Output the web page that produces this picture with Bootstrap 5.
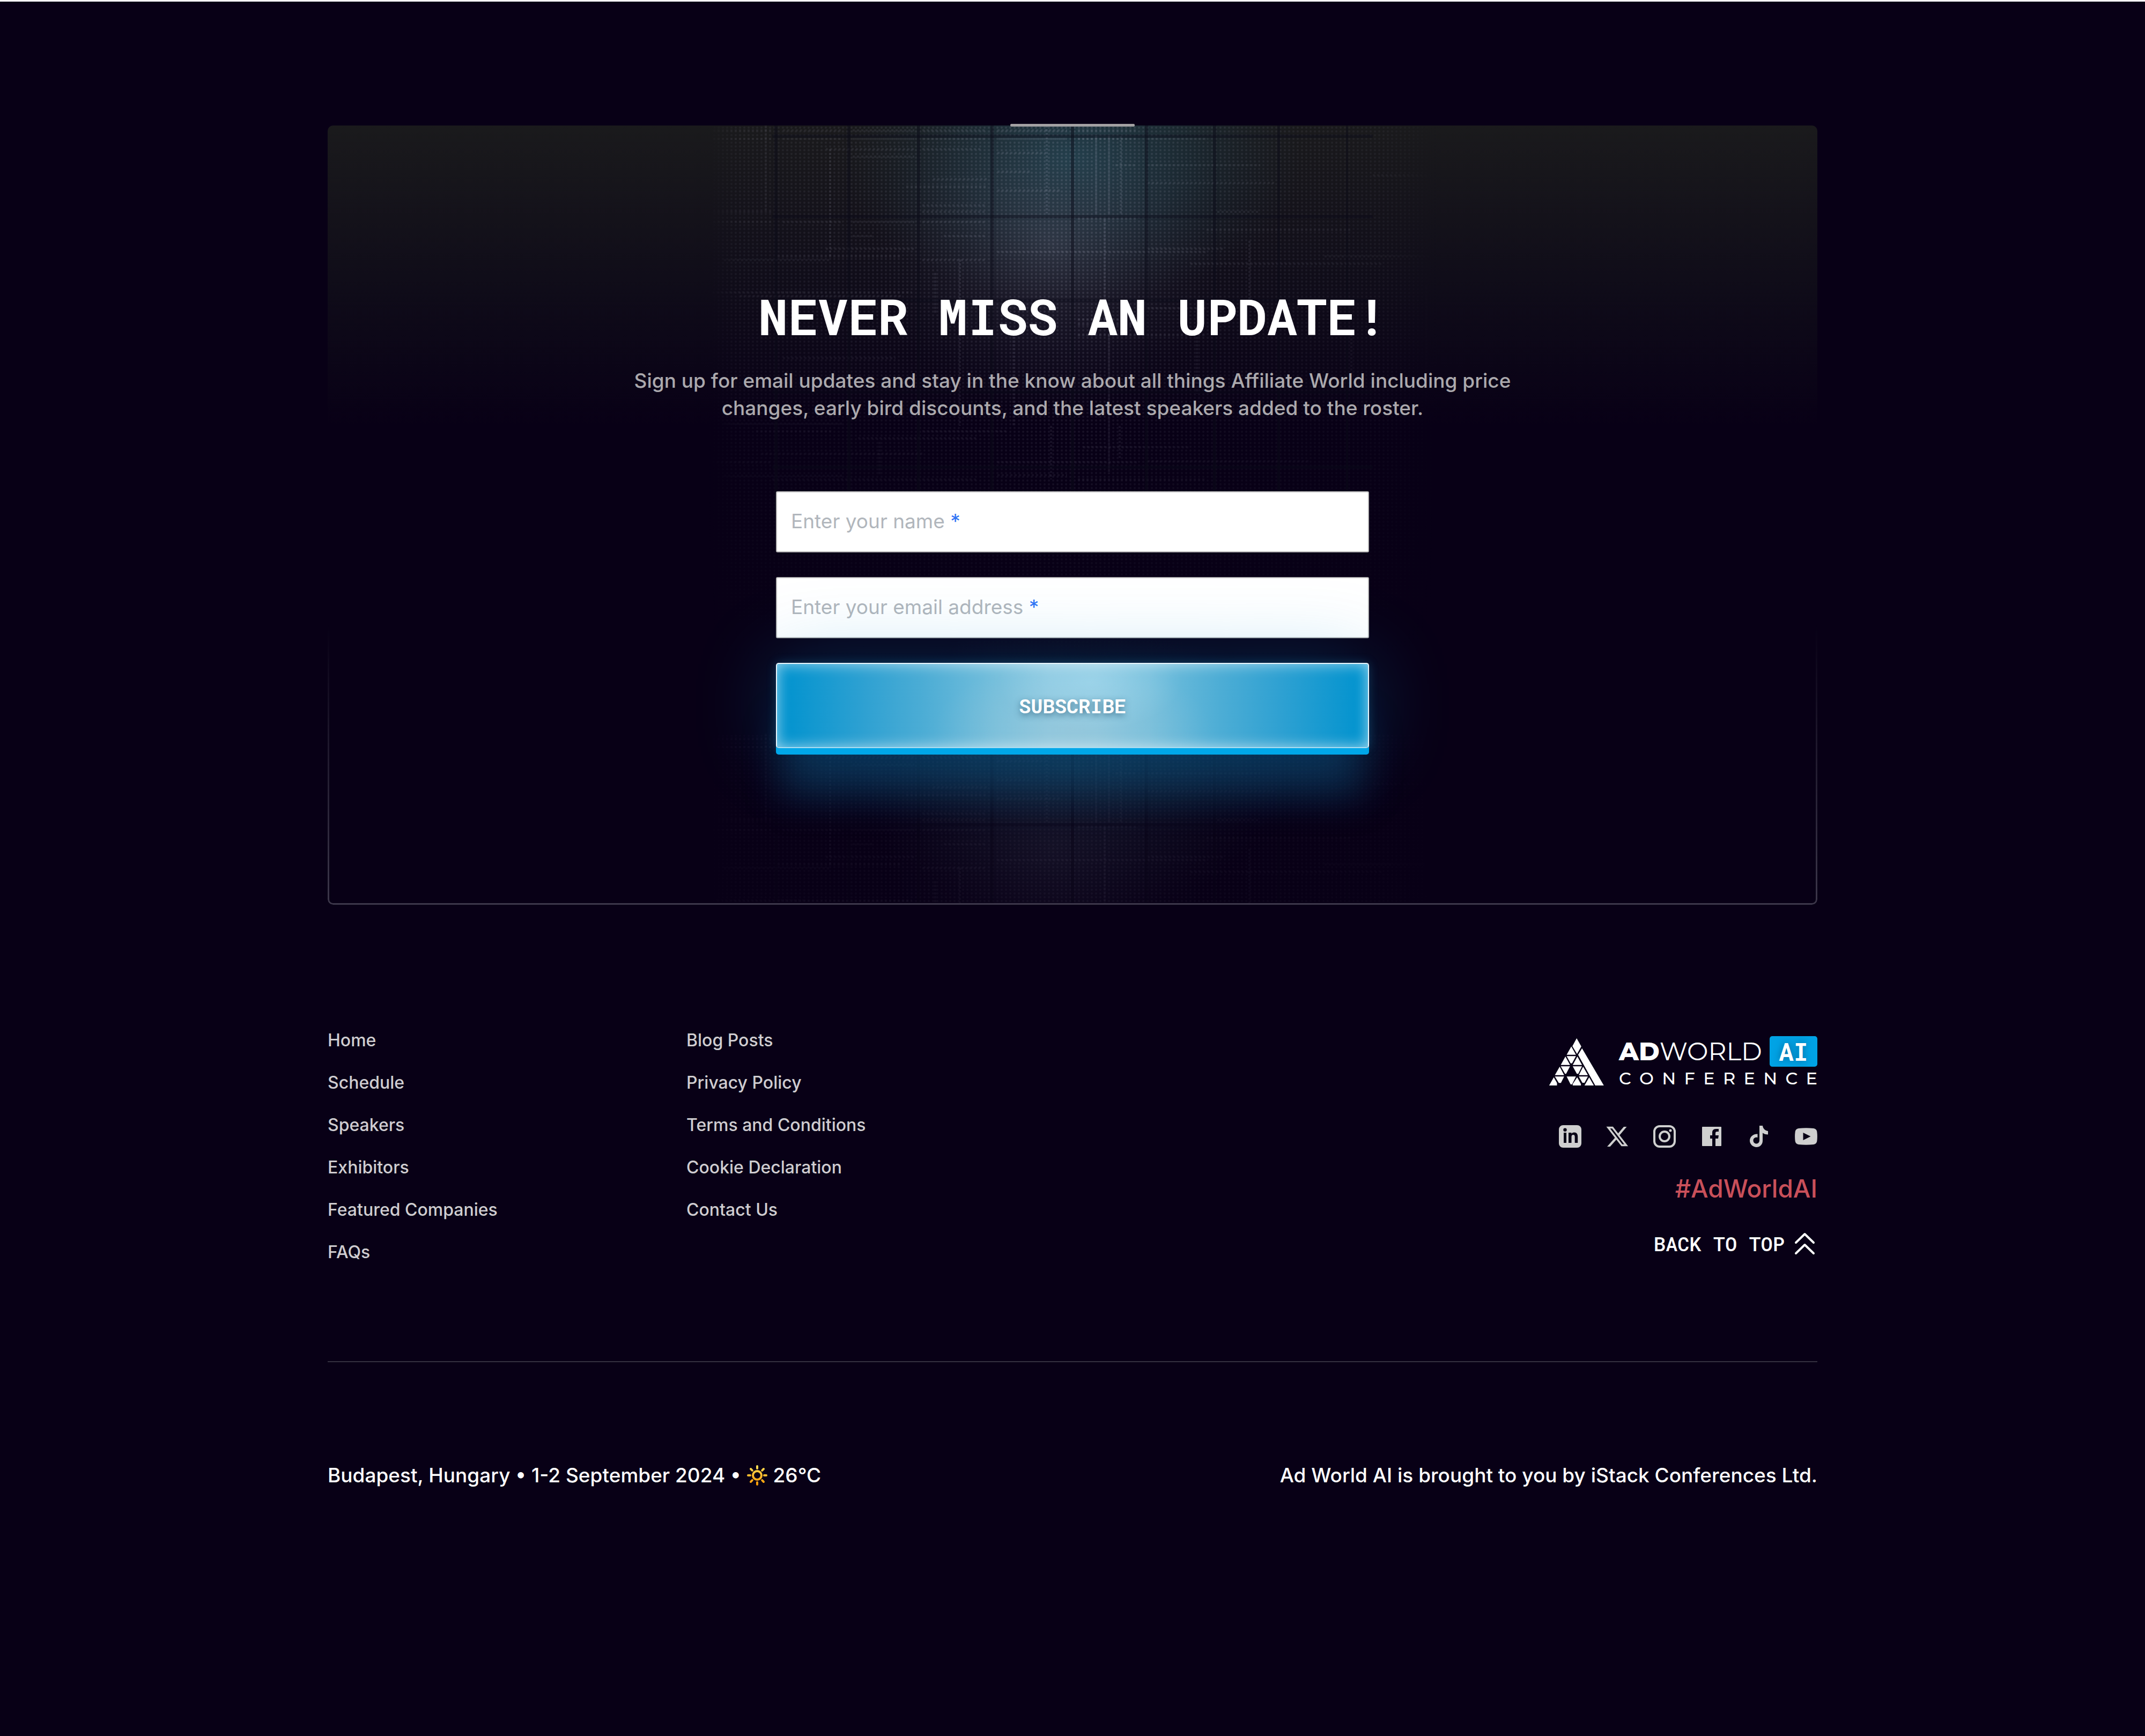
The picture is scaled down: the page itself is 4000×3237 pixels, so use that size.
<!DOCTYPE html>
<html lang="en">
<head>
<meta charset="utf-8">
<meta name="viewport" content="width=device-width, initial-scale=1">
<title>Ad World AI Conference</title>
<link rel="stylesheet" href="https://cdn.jsdelivr.net/npm/bootstrap@5.3.0/dist/css/bootstrap.min.css">
<style>
:root{--night:#080016;--sky:#00a7e9;--mono:"Roboto Mono","DejaVu Sans Mono",monospace}
body{background:var(--night);color:#fff;font-family:Inter,"Liberation Sans",sans-serif;font-size:37px;font-weight:500;line-height:51px;border-top:3px solid #fff;min-height:100vh}
a{text-decoration:none;color:inherit}
a:hover{color:var(--sky)}
.page-wrap{max-width:2778px}
.signup{margin-top:231px;padding:300px 24px 280px;border-radius:10px;background:linear-gradient(#1a1a1c 0,#100d19 280px,rgba(8,0,22,0) 560px)}
.signup-edge{inset:0;border:3px solid #3c374a;border-top:0;border-radius:10px;-webkit-mask-image:linear-gradient(transparent 64%,#000);mask-image:linear-gradient(transparent 64%,#000);pointer-events:none}
.signup-tab{width:232px;height:5px;top:-3px;background:#a3a1a3;border-radius:2px;left:calc(50% - 116px)}
.signup-art{inset:0;overflow:hidden;border-radius:10px}
.signup-art svg{width:1360px;height:100%;flex:none}
.signup h2{font:700 93px/110px var(--mono)}
.intro{max-width:1680px;color:#abA9ad;margin:40px auto 130px}
.signup-form{max-width:1106px;gap:46px}
.field-box{height:114px;border:2px solid #b8b8b8;border-radius:3px;font-size:37px;padding:0 26px;background:#fff}
.field-name{left:28px;top:30px;color:#b1b6bc;font-weight:400;pointer-events:none}
.field-name b{color:#2f74f5;font-weight:400}
.field-box:focus ~ .field-name,.field-box:not(:placeholder-shown) ~ .field-name{opacity:0}
.btn-glow{height:159px;margin-bottom:12px;border:2px solid #e9f7fd;border-bottom-color:#a9dcf1;border-radius:5px;color:#fff;font:700 37px/48px var(--mono);text-shadow:0 4px 12px rgba(30,80,110,.7);
background:radial-gradient(ellipse 170px 90px at 53% 22%,rgba(170,222,242,.5),transparent),radial-gradient(ellipse 260px 130px at 50% 80%,rgba(165,200,214,.4),transparent),linear-gradient(90deg,#0594cf 2%,#2fa1d2 15%,#4dadd5 25%,#75bfdc 37%,#88c7e0 46%,#88c7e0 54%,#75bfdc 63%,#4dadd5 75%,#2fa1d2 85%,#0594cf 98%);
box-shadow:inset 0 0 26px rgba(255,255,255,.6),0 12px 0 var(--sky),0 0 18px rgba(40,170,230,.25),0 0 150px rgba(0,150,215,.3),0 100px 70px -10px rgba(14,90,135,.4)}
.btn-glow:hover{color:#fff;background-color:#0594cf}
.foot{margin-top:229px;padding-bottom:179px;border-bottom:2px solid #34303f}
.foot-links{flex:0 0 669px;font-size:32px;line-height:48px;color:#cfcdd0;gap:31px}
.brand-side{margin-top:16px}
.brand-mark{width:103px;height:88px;margin-right:28px}
.brand-text{width:370px}
.brand-top{font-family:Montserrat,Inter,sans-serif;font-size:47px;line-height:57px}
.brand-top b{font-weight:800}
.brand-top span{font-weight:400}
.ai-tag{background:#00a3e5;border-radius:5px;width:89px;font:700 46px/57px var(--mono);text-shadow:0 0 14px rgba(0,60,100,.6)}
.brand-sub{font-family:Montserrat,Inter,sans-serif;font-size:32px;font-weight:500;line-height:40px;margin-top:2px}
.socials{margin-top:67px;gap:46px;color:#cfcfcf}
.socials svg{width:42px;height:42px;display:block}
.hashtag{color:#c9505a;font-size:46px;line-height:56px;margin-top:48px}
.to-top{font:500 37px/46px var(--mono);margin-top:52px;gap:17px;padding-right:2px}
.to-top svg{width:42px;height:42px}
.foot-end{padding:183px 0 200px;line-height:56px}
.foot-end svg{width:40px;height:40px;margin-top:-6px}
</style>
<script src="https://cdn.jsdelivr.net/npm/bootstrap@5.3.0/dist/js/bootstrap.bundle.min.js"></script>
</head>
<body>
<div class="page-wrap mx-auto">
<section class="signup position-relative text-center">
  <div class="signup-art position-absolute d-flex justify-content-center" aria-hidden="true">
    <svg viewBox="0 0 1360 1453" preserveAspectRatio="xMidYMin slice">
      <defs>
        <pattern id="dots" width="8" height="7" patternUnits="userSpaceOnUse"><rect x="2" y="2" width="4" height="4" rx="2" fill="#a5a5bd" fill-opacity=".18"/></pattern>
        <linearGradient id="sides"><stop offset="0" stop-color="#fff" stop-opacity="0"/><stop offset=".04" stop-color="#fff" stop-opacity=".4"/><stop offset=".38" stop-color="#fff" stop-opacity=".8"/><stop offset=".5" stop-color="#fff"/><stop offset=".64" stop-color="#fff" stop-opacity=".7"/><stop offset=".93" stop-color="#fff" stop-opacity=".35"/><stop offset="1" stop-color="#fff" stop-opacity="0"/></linearGradient>
        <linearGradient id="down" x2="0" y2="1"><stop offset="0" stop-opacity="0"/><stop offset=".35" stop-opacity=".4"/><stop offset=".6" stop-opacity=".65"/><stop offset=".85"/></linearGradient>
        <mask id="fade" maskUnits="userSpaceOnUse" x="0" y="0" width="1360" height="1134"><rect width="1360" height="1134" fill="url(#sides)"/><rect y="250" width="1360" height="884" fill="url(#down)"/></mask>
        <radialGradient id="teal"><stop offset="0" stop-color="#1f4350" stop-opacity=".85"/><stop offset=".5" stop-color="#1e3945" stop-opacity=".5"/><stop offset="1" stop-color="#1c2c36" stop-opacity="0"/></radialGradient>
        <radialGradient id="haze"><stop offset="0" stop-color="#60647a" stop-opacity=".32"/><stop offset=".5" stop-color="#4b5268" stop-opacity=".15"/><stop offset="1" stop-color="#303548" stop-opacity="0"/></radialGradient>
        <g id="grid-tile">
          <ellipse cx="680" cy="60" rx="430" ry="270" fill="url(#teal)"/>
          <ellipse cx="640" cy="220" rx="330" ry="310" fill="url(#haze)"/>
          <g mask="url(#fade)">
            <rect width="1360" height="1134" fill="url(#dots)"/>
            <g fill="none" stroke="#b4b4c8" stroke-opacity=".15" stroke-width="4" stroke-dasharray="4 4">
              <path d="M10 9H120M140 9H250M270 9H385M400 9H520M540 9H670M690 9H800M10 25H120M140 25H250M270 25H385M400 25H520M542 25H670M690 25H800M820 25H930"/>
              <path d="M540 51H630M220 44H385M270 58H385M400 44H510M420 100H520M370 114H520M400 149H520M540 121H660M540 86H600M820 74H1030M690 174H800M10 161H120M400 161H520M950 161H1030M760 74H800M820 107H1060M1240 93H1350"/>
              <path d="M10 180H120M140 180H250M270 180H385M400 180H520M270 206H310M440 206H520M220 230H385M130 244H360M30 251H230M400 251H520M540 236H930M820 230H960M930 195H1200M900 258H1260M1150 244H1350M0 311H180M130 311H380M60 318H360"/>
              <path d="M820 341H930M690 362H800M690 371H800M690 391H930M140 434H350M30 556H250M400 570H560M90 570H230M280 583H500M0 628H120M540 628H800M820 626H1120M120 660H500M540 652H670M690 660H930M30 653H250M100 612H400M700 600H900"/>
            </g>
            <g fill="none" stroke="#b4b4c8" stroke-opacity=".17" stroke-width="4" stroke-dasharray="4 3">
              <path d="M108 0V160M228 44V244M632 0V164M724 20V164M748 20V164M770 20V164M470 250V560M424 275V350M740 175V360M1010 215V330M570 380V560M748 390V650M912 380V500M768 560V620M640 560V660M1200 390V470M1340 300V520M320 590V650"/>
            </g>
          </g>
          <g fill="#0b0a18" fill-opacity=".45">
            <path d="M120 17H1240V23H120zM120 167H1240V173H120zM120 323H1240V329H120zM120 494H1240V500H120zM120 634H1240V640H120z" fill-opacity=".4"/>
            <path d="M124 0H130V720H124zM260 0H266V720H260zM390 0H396V720H390zM527 0H533V720H527zM677 0H683V720H677zM815 0H821V720H815zM942 0H948V720H942zM1062 0H1067V720H1062zM1190 0H1194V720H1190z"/>
          </g>
        </g>
      </defs>
      <use href="#grid-tile"/>
      <use href="#grid-tile" y="1134" opacity=".36"/>
    </svg>
  </div>
  <div class="signup-edge position-absolute"></div>
  <div class="signup-tab position-absolute"></div>
  <div class="position-relative">
    <h2 class="m-0">NEVER MISS AN UPDATE!</h2>
    <p class="intro">Sign up for email updates and stay in the know about all things Affiliate World including price changes, early bird discounts, and the latest speakers added to the roster.</p>
    <form class="signup-form mx-auto d-flex flex-column">
      <div class="position-relative">
        <input class="field-box form-control" id="who" type="text" placeholder=" " required>
        <label class="field-name position-absolute" for="who">Enter your name <b>*</b></label>
      </div>
      <div class="position-relative">
        <input class="field-box form-control" id="mail" type="email" placeholder=" " required>
        <label class="field-name position-absolute" for="mail">Enter your email address <b>*</b></label>
      </div>
      <button class="btn btn-glow position-relative" type="submit">SUBSCRIBE</button>
    </form>
  </div>
</section>

<footer>
  <div class="foot d-flex align-items-start">
    <ul class="foot-links list-unstyled m-0 d-flex flex-column">
      <li><a href="#">Home</a></li><li><a href="#">Schedule</a></li><li><a href="#">Speakers</a></li><li><a href="#">Exhibitors</a></li><li><a href="#">Featured Companies</a></li><li><a href="#">FAQs</a></li>
    </ul>
    <ul class="foot-links list-unstyled m-0 d-flex flex-column">
      <li><a href="#">Blog Posts</a></li><li><a href="#">Privacy Policy</a></li><li><a href="#">Terms and Conditions</a></li><li><a href="#">Cookie Declaration</a></li><li><a href="#">Contact Us</a></li>
    </ul>
    <div class="brand-side ms-auto d-flex flex-column align-items-end">
      <a class="d-flex" href="#">
        <svg class="brand-mark mt-1" viewBox="26 36 308 264" fill="#fff" aria-hidden="true"><path d="M182 36l26 46-24 42-26-44zM212 92l122 208h-48L190 128zM152 82l26 46h-52zM126 136h52l-22 40h-8zM119 138l26 47H93zM186 138l26 47h-52zM93 193h52l-22 42h-6zM160 193h52l-21 42h-8zM87 195l25 47H60zM218 195l27 47h-51zM60 250h52l-18 36H82zM126 250h52l-22 44h-8zM194 250h51l-19 35h-12zM54 254l18 32v14H28zM185 254l21 38v8h-46v-8zM252 254l26 46h-52z"/></svg>
        <div class="brand-text">
          <div class="brand-top d-flex justify-content-between"><div><b>AD</b><span>WORLD</span></div><div class="ai-tag text-center">AI</div></div>
          <div class="brand-sub d-flex justify-content-between"><span>C</span><span>O</span><span>N</span><span>F</span><span>E</span><span>R</span><span>E</span><span>N</span><span>C</span><span>E</span></div>
        </div>
      </a>
      <div class="socials d-flex">
        <a href="#" aria-label="LinkedIn"><svg viewBox="0 0 42 42" fill="currentColor"><path fill-rule="evenodd" d="M8 0h26a8 8 0 0 1 8 8v26a8 8 0 0 1-8 8H8a8 8 0 0 1-8-8V8a8 8 0 0 1 8-8zM9 14v19h5V14zM11.500 5.500a3.200 3.200 0 1 0 0 6.400 3.200 3.200 0 0 0 0-6.400zM18 14v19h5.500V22c0-2.500 1-4 3.200-4s3 1.500 3 4v11h5.500V21.500c0-5-2-8-6.500-8-2.800 0-4.500 1.200-5.200 2.700V14z"/></svg></a>
        <a href="#" aria-label="X"><svg viewBox="0 0 42 42"><path d="M4 4.500h8l25.500 33h-8z" fill="none" stroke="currentColor" stroke-width="3.500"/><path d="M33 3h5.500L24.500 19.500l-2.800-3.200zM17.500 22.500l2.800 3.300L7.500 40H2z" fill="currentColor"/></svg></a>
        <a href="#" aria-label="Instagram"><svg viewBox="0 0 42 42" fill="none" stroke="currentColor" stroke-width="4"><rect x="2" y="2" width="38" height="38" rx="10"/><circle cx="21" cy="21" r="9"/><circle cx="32" cy="10" r="2.500" fill="currentColor" stroke="none"/></svg></a>
        <a href="#" aria-label="Facebook"><svg viewBox="0 0 42 42" fill="currentColor"><path d="M4 3h34a1 1 0 0 1 1 1v34a1 1 0 0 1-1 1H28V25h5l1-6h-6v-4c0-2 1-3 3-3h3V7h-5c-5 0-7 3-7 7v5h-4v6h4v14H4a1 1 0 0 1-1-1V4a1 1 0 0 1 1-1z"/></svg></a>
        <a href="#" aria-label="TikTok"><svg viewBox="0 0 42 42" fill="currentColor"><path d="M22 1h6c.5 5 4 9 10 10v6.500c-4 0-7.500-1-10-3V29c0 7.500-5.500 12-11.500 12S4 36 4 29s6-13 14.500-12.500V23c-5-1-8 2-8 5.500 0 3.500 2.500 6 5.700 6 3.500 0 5.800-2.500 5.800-6.500z"/></svg></a>
        <a href="#" aria-label="YouTube"><svg viewBox="0 0 42 42" fill="currentColor"><path fill-rule="evenodd" d="M7 6q14-1.500 28 0 5.500 1 6.300 6 1.200 9 0 18-.8 5-6.300 6-14 1.500-28 0-5.500-1-6.300-6-1.200-9 0-18Q1.500 7 7 6zM15.500 14v14L29.500 21z"/></svg></a>
      </div>
      <a class="hashtag" href="#">#AdWorldAI</a>
      <a class="to-top d-flex align-items-center" href="#">BACK TO TOP
        <svg viewBox="0 0 42 42" fill="none" stroke="currentColor" stroke-width="4" stroke-linecap="round" stroke-linejoin="round" aria-hidden="true"><path d="M4 19L20.500 3 37 19M4 39l16.500-16L37 39"/></svg></a>
    </div>
  </div>
  <div class="foot-end d-flex justify-content-between">
    <div>Budapest, Hungary • 1-2 September 2024 •
      <svg viewBox="0 0 40 40" fill="none" stroke="url(#sun)" stroke-width="4" stroke-linecap="round" aria-label="Sunny" role="img"><defs><linearGradient id="sun" gradientUnits="userSpaceOnUse" x1="0" y1="0" x2="0" y2="40"><stop offset="0" stop-color="#ffe45c"/><stop offset="1" stop-color="#ff9500"/></linearGradient></defs><circle cx="20" cy="20" r="8"/><path d="M20 3v4M20.010 33v4M3 20h4M33 20.010h4M8 8l2.800 2.800M29.200 29.200L32 32M8 32l2.800-2.800M29.200 10.800L32 8"/></svg>
      26°C</div>
    <div>Ad World AI is brought to you by iStack Conferences Ltd.</div>
  </div>
</footer>
</div>
</body>
</html>
